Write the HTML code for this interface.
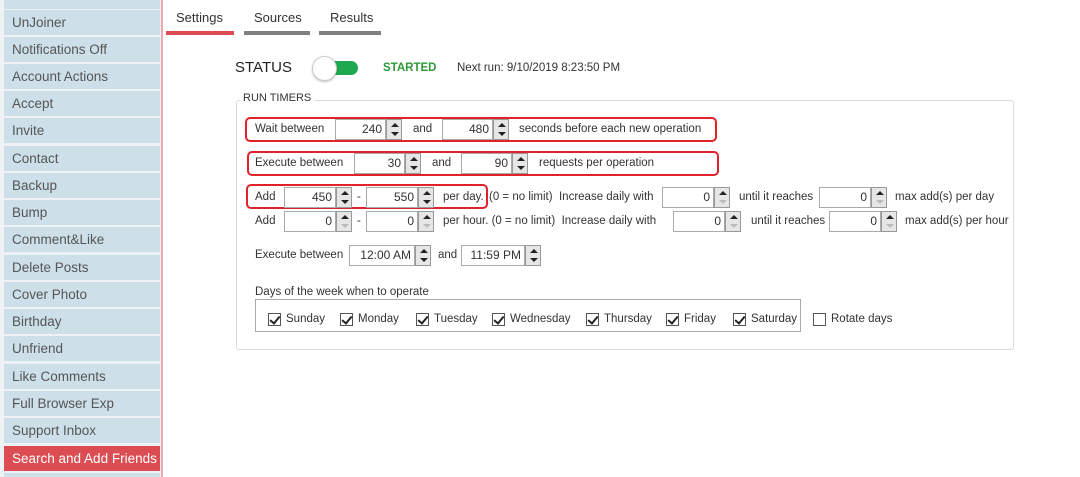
<!DOCTYPE html>
<html><head><meta charset="utf-8"><style>
*{margin:0;padding:0;box-sizing:border-box}
html,body{width:1080px;height:477px;overflow:hidden}
body{background:#fff;font-family:"Liberation Sans",sans-serif;font-size:11.5px;color:#333;position:relative}
.a{position:absolute;white-space:nowrap}
.side{position:absolute;left:0;top:0;width:161px;height:477px;background:#eef2f5}
.pl{position:absolute;left:161px;top:0;width:2px;height:477px;background:#f0a8b0}
.it{position:absolute;left:4px;width:156px;height:25px;background:#cde0ea;color:#555;font-size:13.5px;line-height:25px;padding-left:8px;overflow:hidden}
.it.on{background:#dc4c53;color:#fff}
.t{position:absolute;line-height:14px;transform:translateY(-7px);white-space:nowrap;color:#333;font-size:11.5px}
.in{position:absolute;height:21px;border:1px solid #aaa;background:#fff;text-align:right;padding-right:3px;line-height:19px;color:#333;font-size:12px}
.sp{position:absolute;width:16px;height:21px;border:1px solid #999;background:#e6e6e6}
.sp:before,.sp:after{content:"";position:absolute;left:4px;border-left:4px solid transparent;border-right:4px solid transparent}
.sp:before{top:3px;border-bottom:4px solid #222}
.sp:after{top:12px;border-top:4px solid #222}
.sp.d:after{border-top-color:#bbb}
.rb{position:absolute;border:2px solid #e0232a;border-radius:5px}
.cb{position:absolute;width:13px;height:13px;border:1px solid #555;background:#fff}
.cb.c:after{content:"";position:absolute;left:3px;top:0px;width:4px;height:8px;border:solid #222;border-width:0 2px 2px 0;transform:rotate(40deg)}
</style></head><body>
<div class="side"></div><div class="pl"></div>
<div class="it" style="top:-16px"></div>
<div class="it" style="top:10px">UnJoiner</div>
<div class="it" style="top:37px">Notifications Off</div>
<div class="it" style="top:64px">Account Actions</div>
<div class="it" style="top:91px">Accept</div>
<div class="it" style="top:118px">Invite</div>
<div class="it" style="top:146px">Contact</div>
<div class="it" style="top:173px">Backup</div>
<div class="it" style="top:200px">Bump</div>
<div class="it" style="top:227px">Comment&amp;Like</div>
<div class="it" style="top:255px">Delete Posts</div>
<div class="it" style="top:282px">Cover Photo</div>
<div class="it" style="top:309px">Birthday</div>
<div class="it" style="top:336px">Unfriend</div>
<div class="it" style="top:364px">Like Comments</div>
<div class="it" style="top:391px">Full Browser Exp</div>
<div class="it" style="top:418px">Support Inbox</div>
<div class="it on" style="top:446px">Search and Add Friends</div>
<div class="it" style="top:473px;height:4px"></div>

<div class="t" style="left:176px;top:18px;font-size:13px">Settings</div>
<div class="t" style="left:254px;top:18px;font-size:13px">Sources</div>
<div class="t" style="left:330px;top:18px;font-size:13px">Results</div>
<div class="a" style="left:166px;top:31px;width:68px;height:4px;background:#dc4c53"></div>
<div class="a" style="left:244px;top:31px;width:66px;height:4px;background:#808080"></div>
<div class="a" style="left:319px;top:31px;width:62px;height:4px;background:#808080"></div>

<div class="t" style="left:235px;top:68px;font-size:15px;color:#222">STATUS</div>
<div class="a" style="left:326px;top:61px;width:32px;height:14px;border-radius:7px;background:#1ea84f"></div>
<div class="a" style="left:312px;top:56px;width:25px;height:25px;border-radius:50%;background:#fff;border:1px solid #ccc;box-shadow:0 1px 2px rgba(0,0,0,.25)"></div>
<div class="t" style="left:383px;top:68px;font-weight:bold;color:#2e9a3a">STARTED</div>
<div class="t" style="left:457px;top:68px">Next run: 9/10/2019 8:23:50 PM</div>

<div class="a" style="left:236px;top:100px;width:778px;height:250px;border:1px solid #d8dde2;border-radius:3px"></div>
<div class="t" style="left:240px;top:98px;background:#fff;padding:0 3px;font-size:11px">RUN TIMERS</div>

<div class="rb" style="left:245px;top:117px;width:472px;height:25px"></div>
<div class="t" style="left:255px;top:129px">Wait between</div>
<div class="in" style="left:335px;top:119px;width:51px">240</div><div class="sp" style="left:386px;top:119px"></div>
<div class="t" style="left:413px;top:129px">and</div>
<div class="in" style="left:442px;top:119px;width:51px">480</div><div class="sp" style="left:493px;top:119px"></div>
<div class="t" style="left:519px;top:129px">seconds before each new operation</div>

<div class="rb" style="left:247px;top:151px;width:472px;height:25px"></div>
<div class="t" style="left:255px;top:163px">Execute between</div>
<div class="in" style="left:354px;top:153px;width:51px">30</div><div class="sp" style="left:405px;top:153px"></div>
<div class="t" style="left:432px;top:163px">and</div>
<div class="in" style="left:461px;top:153px;width:51px">90</div><div class="sp" style="left:512px;top:153px"></div>
<div class="t" style="left:539px;top:163px">requests per operation</div>

<div class="rb" style="left:246px;top:184px;width:242px;height:25px"></div>
<div class="t" style="left:255px;top:197px">Add</div>
<div class="in" style="left:284px;top:187px;width:52px">450</div><div class="sp" style="left:336px;top:187px"></div>
<div class="t" style="left:357px;top:197px">-</div>
<div class="in" style="left:366px;top:187px;width:52px">550</div><div class="sp" style="left:418px;top:187px"></div>
<div class="t" style="left:443px;top:197px">per day.</div>
<div class="t" style="left:489px;top:197px">(0 = no limit)&nbsp; Increase daily with</div>
<div class="in" style="left:662px;top:187px;width:52px">0</div><div class="sp d" style="left:714px;top:187px"></div>
<div class="t" style="left:739px;top:197px">until it reaches</div>
<div class="in" style="left:819px;top:187px;width:52px">0</div><div class="sp d" style="left:871px;top:187px"></div>
<div class="t" style="left:895px;top:197px">max add(s) per day</div>

<div class="t" style="left:255px;top:221px">Add</div>
<div class="in" style="left:284px;top:211px;width:52px">0</div><div class="sp d" style="left:336px;top:211px"></div>
<div class="t" style="left:357px;top:221px">-</div>
<div class="in" style="left:366px;top:211px;width:52px">0</div><div class="sp d" style="left:418px;top:211px"></div>
<div class="t" style="left:443px;top:221px">per hour. (0 = no limit)&nbsp; Increase daily with</div>
<div class="in" style="left:673px;top:211px;width:52px">0</div><div class="sp d" style="left:725px;top:211px"></div>
<div class="t" style="left:751px;top:221px">until it reaches</div>
<div class="in" style="left:829px;top:211px;width:52px">0</div><div class="sp d" style="left:881px;top:211px"></div>
<div class="t" style="left:905px;top:221px">max add(s) per hour</div>

<div class="t" style="left:255px;top:255px">Execute between</div>
<div class="in" style="left:349px;top:245px;width:66px">12:00 AM</div><div class="sp" style="left:415px;top:245px"></div>
<div class="t" style="left:438px;top:255px">and</div>
<div class="in" style="left:461px;top:245px;width:64px">11:59 PM</div><div class="sp" style="left:525px;top:245px"></div>

<div class="t" style="left:255px;top:292px">Days of the week when to operate</div>
<div class="a" style="left:255px;top:299px;width:546px;height:33px;border:1px solid #aaa"></div>
<div class="cb c" style="left:268px;top:313px"></div><div class="t" style="left:286px;top:319px">Sunday</div>
<div class="cb c" style="left:340px;top:313px"></div><div class="t" style="left:358px;top:319px">Monday</div>
<div class="cb c" style="left:416px;top:313px"></div><div class="t" style="left:434px;top:319px">Tuesday</div>
<div class="cb c" style="left:492px;top:313px"></div><div class="t" style="left:510px;top:319px">Wednesday</div>
<div class="cb c" style="left:586px;top:313px"></div><div class="t" style="left:604px;top:319px">Thursday</div>
<div class="cb c" style="left:666px;top:313px"></div><div class="t" style="left:684px;top:319px">Friday</div>
<div class="cb c" style="left:733px;top:313px"></div><div class="t" style="left:751px;top:319px">Saturday</div>
<div class="cb" style="left:813px;top:313px"></div><div class="t" style="left:831px;top:319px">Rotate days</div>
</body></html>
